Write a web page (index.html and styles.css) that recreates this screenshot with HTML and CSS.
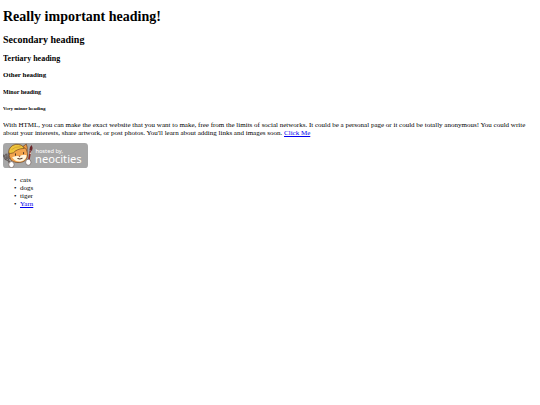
FILE: index.html
```html
<!DOCTYPE html>
<html lang="en">
  <head>
    <meta charset="UTF-8" />
    <meta name="viewport" content="width=device-width, initial-scale=1.0" />
    <title>My web site</title>
    <link rel="stylesheet" href="styles.css">
  </head>

  <body>
    <h1>Really important heading!</h1>
    <h2>Secondary heading</h2>
    <h3>Tertiary heading</h3>
    <h4>Other heading</h4>
    <h5>Minor heading</h5>
    <h6>Very minor heading</h6>

    <p>
      With HTML, you can make the exact website that you want to make, free from
      the limits of social networks. It could be a personal page or it could be
      totally anonymous! You could write about your interests, share artwork, or
      post photos. You'll learn about adding links and images soon.
      <a href="#">Click Me</a>
    </p>

    <a class="badge" href="#" aria-label="hosted by neocities">
      <svg viewBox="0 0 252 75">
        <rect width="252" height="75" rx="10" fill="#a7a7a7" />
        <!-- fork -->
        <g fill="none" stroke-linecap="round">
          <path d="M2 37l5 10q5 5 11-1l-2-13M9 34l4 14l10 15" stroke="#4d4340" stroke-width="5" />
          <path d="M2 37l5 10q5 5 11-1l-2-13M9 34l4 14l10 15" stroke="#d2d2d2" stroke-width="1" />
        </g>
        <!-- brush -->
        <path d="M76 54l5-30" stroke="#8b2b26" stroke-width="5" />
        <path d="M79 30l4 1" stroke="#e6d8c8" stroke-width="4" />
        <path d="M78 22q-1-10 7-16q5 9 1 17z" fill="#6b2427" />
        <!-- cat -->
        <g stroke="#6b4020" stroke-width="2" stroke-linejoin="round">
          <path d="M57 12l12-9q5 9 2 23z" fill="#ef9a42" />
          <path d="M21 23Q36 4 61 12q11 5 12 20q1 19-15 24q-20 6-34-5q-10-12-3-28z" fill="#f2a44e" />
          <path d="M27 42q12-4 21-3q11-7 22-3q-2 15-15 18q-19 3-28-12z" fill="#fff6df" stroke="none" />
          <path d="M16 29Q18 8 38 4q19-1 25 12q-22 1-32 13q-9 4-15 0z" fill="#efc43b" />
          <path d="M25 20q11-10 27-9" fill="none" stroke="#c6952c" />
        </g>
        <path d="M46 38h6l-3 4z" fill="#8c3f30" />
        <path d="M37 32v4M61 28v4M44 46q6 3 13-1" fill="none" stroke="#4f3427" stroke-width="3" stroke-linecap="round" />
        <g fill="#fff" stroke="#71605a" stroke-width="2">
          <ellipse cx="25" cy="64" rx="8" ry="9" />
          <ellipse cx="75" cy="57" rx="8" ry="9" />
        </g>
        <text class="badge-small" x="96" y="29">hosted by,</text>
        <text class="badge-name" x="95" y="59">neocities</text>
      </svg>
    </a>

    <ul>
      <li>cats</li>
      <li>dogs</li>
      <li>tiger</li>
      <li><a href="#">Yarn</a></li>
    </ul>
  </body>
</html>
```

FILE: styles.css
```css
body {
  margin: 9px 3px;
  font-family: "Liberation Serif", "Times New Roman", serif;
  font-size: 7px;
  line-height: 8px;
  color: #000;
  background-color: #fff;
}

h1,
h2,
h3,
h4,
h5,
h6 {
  margin: 0 0 9px;
  font-weight: bold;
}

h1 {
  font-size: 14px;
  line-height: 16px;
}

h2 {
  font-size: 10px;
  line-height: 11px;
}

h3 {
  margin-bottom: 8px;
  font-size: 8px;
  line-height: 9px;
}

h4 {
  font-size: 7px;
}

h5 {
  font-size: 6px;
}

h6 {
  margin-bottom: 8px;
  font-size: 5px;
}

p {
  margin: 0 0 6px;
}

a {
  color: #0000ee;
}

.badge {
  display: block;
  width: 85px;
}

.badge svg {
  display: block;
  width: 100%;
}

.badge text {
  font-family: "Noto Sans", "Open Sans", sans-serif;
  fill: #fff;
}

.badge-small {
  font-size: 17px;
}

.badge-name {
  font-size: 33px;
}

ul {
  margin: 8px 0;
  padding-left: 17px;
  list-style-type: "•\00a0\00a0";
}
```
